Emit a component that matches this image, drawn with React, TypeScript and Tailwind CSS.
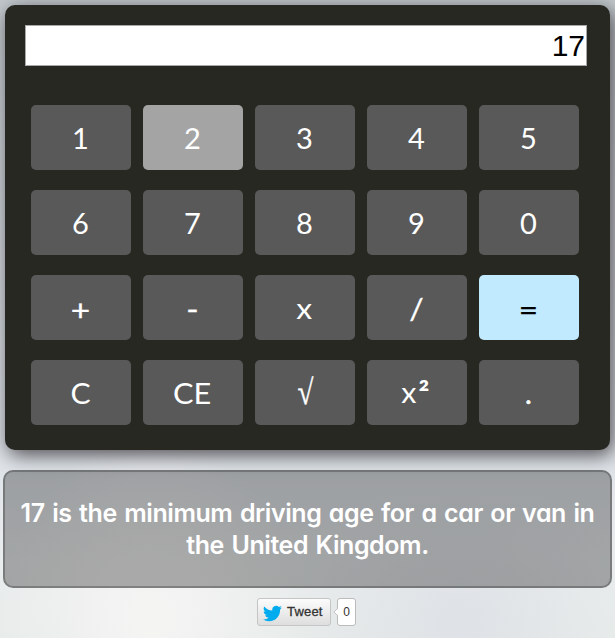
import React from "react";

type Key = { label: React.ReactNode; tone?: "hover" | "equals"; shift?: string };

const keys: Key[] = [
  { label: "1" },
  { label: "2", tone: "hover" },
  { label: "3" },
  { label: "4" },
  { label: "5" },
  { label: "6" },
  { label: "7" },
  { label: "8" },
  { label: "9" },
  { label: "0" },
  { label: "+", shift: "translate-y-[2px] scale-x-[1.15] [-webkit-text-stroke:0.3px_white]" },
  { label: "-", shift: "translate-y-px scale-x-[1.15] [-webkit-text-stroke:0.3px_white]" },
  { label: "x", shift: "scale-x-110" },
  { label: "/", shift: "scale-x-110 [-webkit-text-stroke:0.3px_white]" },
  { label: "=", tone: "equals", shift: "translate-y-px scale-x-[1.15] [-webkit-text-stroke:0.3px_black]" },
  { label: "C", shift: "scale-x-[1.04]" },
  { label: "CE", shift: "scale-x-[1.06]" },
  { label: "√", shift: "font-['Liberation_Serif',serif] translate-x-px scale-y-[1.2] [-webkit-text-stroke:0.3px_white]" },
  {
    label: (
      <>
        x<span className="relative top-[3px] ml-[2px] inline-block text-[31px] font-bold">²</span>
      </>
    ),
    shift: "-translate-x-px -translate-y-px scale-x-105",
  },
  { label: ".", shift: "[-webkit-text-stroke:0.5px_white]" },
];

function CalcKey({ label, tone, shift }: Key) {
  const color =
    tone === "hover"
      ? "bg-[#a4a4a4] text-white"
      : tone === "equals"
        ? "bg-[#c2eaff] text-black"
        : "bg-[#595959] text-white";
  return (
    <button
      className={`flex h-[65px] w-[100px] items-center justify-center rounded-[5px] pr-px text-[29px] leading-none ${color}`}
    >
      <span className={`inline-block ${shift ?? ""}`}>{label}</span>
    </button>
  );
}

function Calculator() {
  return (
    <section className="h-[445px] w-[605px] rounded-[10px] bg-[#282822] pt-5 pl-5 shadow-[3px_5px_20px_rgba(40,35,40,0.8)]">
      <input
        readOnly
        value="17"
        className="block h-[41px] w-[562px] border border-[#a9a9a9] bg-white px-px text-right font-['Liberation_Sans',Arial,sans-serif] text-[30px] leading-none text-black outline-none"
      />
      <div className="mt-[39px] ml-1.5 grid w-[548px] grid-cols-5 gap-x-3 gap-y-5 font-['Lato',sans-serif]">
        {keys.map((key, i) => (
          <CalcKey key={i} {...key} />
        ))}
      </div>
    </section>
  );
}

function Fact() {
  return (
    <section className="mt-5 -ml-0.5 flex h-[118px] w-[609px] flex-col items-center rounded-[10px] border-2 border-black/25 bg-black/30 pt-[25px] font-['Inter',sans-serif] text-[25px] leading-8 font-semibold tracking-[-0.43px] [word-spacing:1.6px] whitespace-nowrap text-white [font-feature-settings:'cv11']">
      <p>17 is the minimum driving age for a car or van in</p>
      <p>the United Kingdom.</p>
    </section>
  );
}

function TweetButton() {
  return (
    <div className="mt-2.5 ml-[252px] flex h-7 items-center font-['Liberation_Sans',Arial,sans-serif]">
      <button className="flex h-7 w-[74px] items-center rounded-[3px] border border-[#c5c5c5] bg-linear-to-b from-[#fcfcfc] to-[#dedede] pl-[5px] text-[13px] text-[#333]">
        <svg viewBox="0 0 24 24" className="mt-0.5 h-[19px] w-[19px] fill-[#00aced]" aria-hidden="true">
          <path d="M23.95 4.57a10 10 0 0 1-2.82.78 4.96 4.96 0 0 0 2.16-2.73c-.95.56-2 .97-3.13 1.2a4.92 4.92 0 0 0-8.38 4.48A13.98 13.98 0 0 1 1.64 3.16a4.92 4.92 0 0 0 1.52 6.57 4.9 4.9 0 0 1-2.23-.61v.06a4.92 4.92 0 0 0 3.95 4.83 5 5 0 0 1-2.21.08 4.94 4.94 0 0 0 4.6 3.42A9.87 9.87 0 0 1 0 19.54a13.99 13.99 0 0 0 7.55 2.21c9.05 0 14-7.5 14-13.98 0-.21 0-.42-.02-.63a9.94 9.94 0 0 0 2.42-2.57z" />
        </svg>
        <span className="ml-[5px] tracking-[0.2px] [-webkit-text-stroke:0.3px_#333]">Tweet</span>
      </button>
      <svg viewBox="0 0 6 10" className="z-10 -mr-px ml-[2px] h-2.5 w-[5px] shrink-0" aria-hidden="true">
        <path d="M6 .5 1 5l5 4.5" fill="white" stroke="#bbb" />
      </svg>
      <span className="flex h-7 w-[19px] items-center justify-center rounded-[3px] border border-[#bbb] bg-white text-[12px] text-[#333]">
        0
      </span>
    </div>
  );
}

export default function App() {
  return (
    <main className="h-[638px] w-[615px] overflow-hidden bg-[radial-gradient(ellipse_150px_180px_at_150px_620px,#f4f4f3_10%,transparent_100%),radial-gradient(ellipse_180px_140px_at_460px_620px,#dfe3e7_10%,transparent_100%),linear-gradient(to_bottom,#c3cace_0px,#dfe4e9_460px,#eaedee_560px,#e8ecea_638px)] pt-[5px] pl-[5px]">
      <Calculator />
      <Fact />
      <TweetButton />
    </main>
  );
}
